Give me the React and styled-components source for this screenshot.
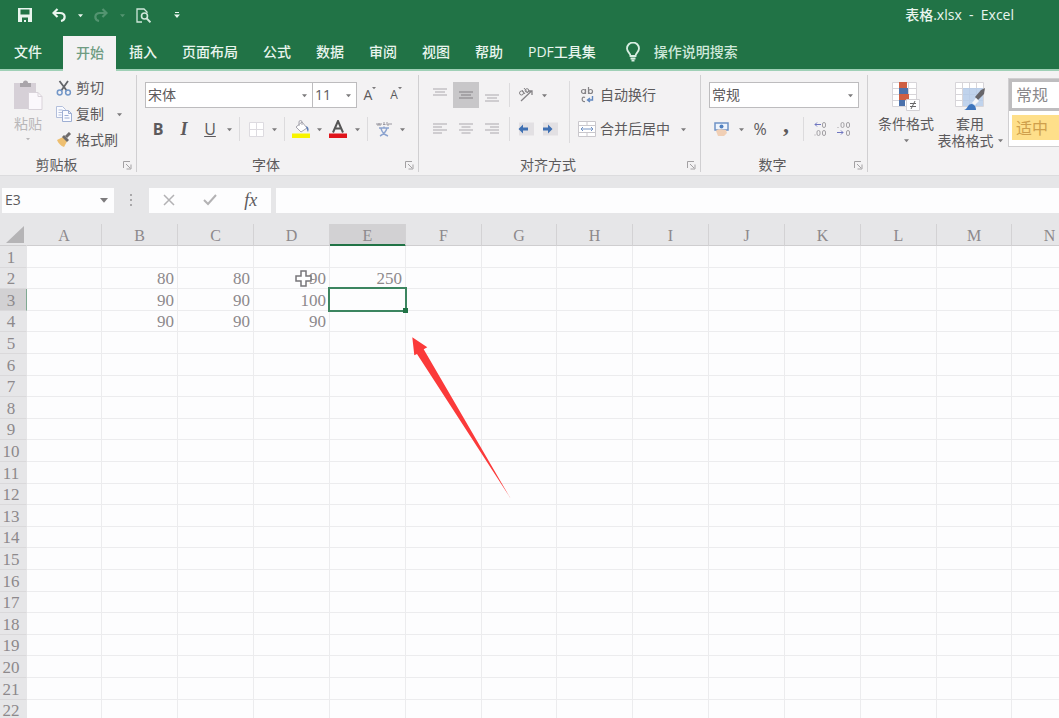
import React from "react";
import styled, { createGlobalStyle, css } from "styled-components";

const colors = {
  green: "#217346",
  mint: "#9fd0b6",
  ribbon: "#f3f2f3",
  chrome: "#e6e6e8",
  line: "#d0cfd1",
  grid: "#ececee",
  ink: "#5c5a5c",
  muted: "#b9b7b9",
  cell: "#8d898c",
};

const GlobalStyle = createGlobalStyle`
  * {
    box-sizing: border-box;
  }
  body {
    margin: 0;
    font-family: "Open Sans", "Noto Sans CJK SC", sans-serif;
    font-size: 14px;
    line-height: 18px;
    color: ${colors.ink};
  }
  button, input {
    font: inherit;
    color: inherit;
    margin: 0;
    padding: 0;
    border: 0;
    background: none;
  }
`;

const Window = styled.div`
  display: flex;
  flex-direction: column;
  height: 100vh;
  overflow: hidden;
  background: #fdfdfe;
`;

/* title bar */

const TitleBar = styled.header`
  display: flex;
  align-items: center;
  justify-content: space-between;
  height: 36px;
  padding: 0 45px 6px 6px;
  background: ${colors.green};
  color: #e9f5ee;
`;

const QuickAccess = styled.div`
  display: flex;
  align-items: center;
`;

const QuickButton = styled.button`
  display: flex;
  align-items: center;
  justify-content: center;
  width: ${({ $width = 30 }) => $width}px;
  height: 24px;
  opacity: ${({ disabled }) => (disabled ? 0.25 : 1)};
`;

const Title = styled.h1`
  margin: 0;
  font-size: 14px;
  font-weight: 500;
  white-space: pre;
`;

/* tabs */

const TabBar = styled.nav`
  display: flex;
  align-items: stretch;
  height: 35px;
  border-bottom: 2px solid ${colors.mint};
  background: ${colors.green};
`;

const Tab = styled.button`
  flex: none;
  padding: 0 12px 2px 13px;
  color: #e9f5ee;
  font-weight: 500;
  white-space: nowrap;

  ${({ $file }) =>
    $file &&
    css`
      padding: 0 21px 2px 14px;
    `}

  ${({ $active }) =>
    $active &&
    css`
      margin-bottom: -2px;
      background: ${colors.ribbon};
      color: #6f9c82;
    `}
`;

const TellMe = styled.button`
  display: flex;
  align-items: center;
  gap: 14px;
  padding: 0 0 2px 18px;
  color: #cfe8da;
  font-weight: 500;
  white-space: nowrap;
`;

/* ribbon */

const Ribbon = styled.section`
  display: flex;
  flex: none;
  height: 105px;
  padding: 4px 0 3px;
  overflow: hidden;
  background: ${colors.ribbon};
  border-bottom: 1px solid #dcdcde;
`;

const Group = styled.div`
  display: flex;
  flex: none;
  flex-direction: column;
  width: ${({ $width }) => $width}px;
  border-right: 1px solid ${colors.line};
`;

const GroupBody = styled.div`
  display: flex;
  flex: 1;
  padding: 0 8px;
`;

const GroupFooter = styled.div`
  display: flex;
  align-items: center;
  height: 14px;
  padding-right: 3px;
`;

const GroupName = styled.span`
  flex: 1;
  padding-right: 8px;
  text-align: center;
`;

const Launcher = styled.button`
  display: flex;
  align-items: center;
  justify-content: center;
  width: 12px;
  height: 12px;
`;

const Column = styled.div`
  display: flex;
  flex-direction: column;
  gap: 8px;
  padding-top: 7px;
`;

const Row = styled.div`
  display: flex;
  align-items: center;
  gap: ${({ $gap = 0 }) => $gap}px;
  height: 26px;
`;

const ToolButton = styled.button`
  display: flex;
  align-items: center;
  justify-content: center;
  width: ${({ $width = 26 }) => $width}px;
  height: 26px;
  font-size: 16px;
  background: ${({ $pressed }) => ($pressed ? "#c8c7c9" : "none")};
`;

const ItalicText = styled.i`
  font-family: "Liberation Serif", serif;
  font-size: 18px;
  font-weight: 700;
`;

const FontSizeText = styled.span`
  display: flex;
  align-items: flex-start;
  font-size: ${({ $size }) => $size}px;
`;

const Comma = styled.b`
  font-family: "Liberation Serif", serif;
  font-size: 24px;
  line-height: 8px;
  padding-bottom: 10px;
`;

const CaretButton = styled.button`
  display: flex;
  align-items: center;
  justify-content: center;
  width: 12px;
  height: 26px;
`;

const Separator = styled.span`
  width: 1px;
  height: 24px;
  margin: 0 4px;
  background: #dcdbdd;
`;

const TallSeparator = styled(Separator)`
  height: 62px;
  margin: 6px 8px 0 7px;
`;

const Combo = styled.label`
  display: flex;
  align-items: center;
  width: ${({ $width }) => $width}px;
  height: 26px;
  padding: 0 2px;
  border: 1px solid #bdbcbe;
  background: #fff;

  input {
    flex: 1;
    min-width: 0;
    outline: 0;
  }
`;

const FontRow = styled(Row)`
  ${Combo} + ${Combo} {
    margin-left: -1px;
  }
`;

const LabelButton = styled.button`
  display: flex;
  align-items: center;
  gap: 4px;
  height: 26px;
  white-space: nowrap;
`;

const PasteButton = styled.button`
  display: flex;
  flex-direction: column;
  align-items: center;
  align-self: flex-start;
  gap: 4px;
  width: 40px;
  padding-top: 5px;
  color: ${colors.muted};
`;

const ClipboardList = styled.div`
  display: flex;
  flex-direction: column;
  padding-left: 8px;
`;

const BigButton = styled.button`
  display: flex;
  flex-direction: column;
  align-items: center;
  align-self: flex-start;
  width: 64px;
  padding-top: 3px;
  line-height: 17px;
  white-space: nowrap;

  svg {
    flex: none;
  }
`;

const BigLabel = styled.span`
  display: flex;
  align-items: center;
  justify-content: center;
  gap: 4px;
  min-height: 17px;
`;

const BigIcon = styled.span`
  height: 34px;
`;

const Styles = styled.div`
  display: flex;
  flex: 1;
  padding: 3px 0 0 6px;
`;

const Gallery = styled.div`
  display: flex;
  flex: none;
  flex-direction: column;
  gap: 4px;
  align-self: flex-start;
  width: 160px;
  height: 69px;
  margin-left: 6px;
  border: 1px solid ${colors.line};
  background: #fff;
`;

const StyleCell = styled.button`
  height: ${({ $selected }) => ($selected ? 32 : 25)}px;
  padding-left: 4px;
  border: ${({ $selected }) => ($selected ? "3px solid #bebdbf" : "0")};
  margin-left: ${({ $selected }) => ($selected ? 0 : 3)}px;
  background: ${({ $selected }) => ($selected ? "#fff" : "#fedf8a")};
  color: ${({ $selected }) => ($selected ? "#8a888a" : "#cf9f4c")};
  font-size: 16px;
  text-align: left;
`;

/* formula bar */

const FormulaBar = styled.div`
  display: flex;
  flex: none;
  align-items: center;
  height: 48px;
  background: ${colors.chrome};
`;

const NameBox = styled.label`
  display: flex;
  align-items: center;
  width: 112px;
  height: 25px;
  margin-left: 2px;
  padding: 0 4px 0 3px;
  background: #fdfdfe;

  input {
    flex: 1;
    min-width: 0;
    outline: 0;
  }
`;

const Grip = styled.span`
  display: flex;
  justify-content: center;
  width: 35px;
`;

const FormulaTools = styled.div`
  display: flex;
  align-items: center;
  justify-content: space-around;
  width: 122px;
  height: 25px;
  background: #fdfdfe;
`;

const FxLabel = styled.i`
  font-family: "Liberation Serif", serif;
  font-size: 18px;
`;

const FormulaInput = styled.input`
  && {
    flex: 1;
    height: 25px;
    margin-left: 5px;
    padding: 0 8px;
    background: #fdfdfe;
    outline: 0;
  }
`;

/* sheet */

const Sheet = styled.main`
  position: relative;
  flex: 1;
  overflow: hidden;
`;

const Table = styled.table`
  table-layout: fixed;
  width: 1px;
  border-spacing: 0;
  font-family: "Liberation Serif", serif;
  font-size: 17px;
  line-height: 18px;
  color: ${colors.cell};
`;

const Col = styled.col`
  width: ${({ $width }) => $width}px;
`;

const ColumnHead = styled.th`
  height: 22px;
  padding: 3px 0 0;
  border-right: 1px solid #d3d2d4;
  border-bottom: 1px solid #cfced0;
  background: ${colors.chrome};
  font-size: 16px;
  font-weight: 400;

  ${({ $active }) =>
    $active &&
    css`
      border-bottom-color: ${colors.green};
      background: #d2d1d3;
      box-shadow: inset 0 -1px ${colors.green};
    `}
`;

const Corner = styled(ColumnHead)`
  padding: 0;
  border-right-color: ${colors.chrome};

  svg {
    display: block;
    margin: 0 0 0 6px;
  }
`;

const RowHead = styled.th`
  padding: 2px 4px 0 0;
  border-right: 1px solid ${({ $active }) => ($active ? "#7fa992" : colors.chrome)};
  border-bottom: 1px solid #dad9db;
  background: ${({ $active }) => ($active ? "#d2d1d3" : colors.chrome)};
  font-weight: 400;
`;

const Cell = styled.td`
  position: relative;
  padding: 2px 3px 0 0;
  border-right: 1px solid ${colors.grid};
  border-bottom: 1px solid ${colors.grid};
  text-align: right;
`;

// 108px for every five rows
const SheetRow = styled.tr`
  height: 22px;

  &:nth-child(5n + 2),
  &:nth-child(5n + 4) {
    height: 21px;
  }
`;

const Selection = styled.div`
  position: absolute;
  z-index: 1;
  inset: -2px;
  border: 2px solid #3c8560;

  &::after {
    content: "";
    position: absolute;
    right: -3px;
    bottom: -3px;
    width: 5px;
    height: 5px;
    background: ${colors.green};
  }
`;

const Pointer = styled.svg`
  position: absolute;
  top: 2px;
  left: 41px;
`;

const Arrow = styled.svg`
  position: absolute;
  top: 113px;
  left: 411px;
`;

/* icons */

const Caret = ({ size = 5, color = "#7d7b7d" }) => (
  <svg width={size} height={size} viewBox="0 0 6 6">
    <path d="M0 1.5h6L3 5z" fill={color} />
  </svg>
);

const SaveIcon = () => (
  <svg width="14" height="14" viewBox="0 0 14 14">
    <path
      fill="#e9f5ee"
      fillRule="evenodd"
      d="M0 0h14v14H0zM2.5 1.5v5h9v-5zM4 9.5V14h2v-2h2v2h2V9.5z"
    />
  </svg>
);

const UndoIcon = () => (
  <svg width="14" height="14" viewBox="0 0 14 14" fill="none" stroke="#e9f5ee" strokeWidth="2.2">
    <path d="M5.5 1 1.5 5l4 4M2 5h6c6 0 6 7 1 8" />
  </svg>
);

const RedoIcon = () => (
  <svg width="14" height="14" viewBox="0 0 14 14" fill="none" stroke="#e9f5ee" strokeWidth="2.2">
    <path d="M8.5 1l4 4-4 4M12 5H6c-6 0-6 7-1 8" />
  </svg>
);

const PreviewIcon = () => (
  <svg width="15" height="15" viewBox="0 0 15 15" fill="none" stroke="#cfe8da">
    <path d="M6 14H1V1h7l3 3v1" strokeWidth="1.3" />
    <circle cx="8.5" cy="8" r="3" strokeWidth="1.6" />
    <path d="m10.5 10.300 4 4" strokeWidth="2" />
  </svg>
);

const CustomizeIcon = () => (
  <svg width="6" height="8" viewBox="0 0 6 8" fill="#e9f5ee">
    <path d="M1 1h4v1H1zM0 3.5h6L3 7z" />
  </svg>
);

const BulbIcon = () => (
  <svg width="14" height="20" viewBox="0 0 14 20" fill="none" stroke="#d8eee2" strokeWidth="1.8">
    <path d="M4.5 14c0-3-3.5-4-3.5-7.5a6 6 0 0 1 12 0C13 10 9.5 11 9.5 14zM4.5 16.5h5M5.5 18.700h3" />
  </svg>
);

const PasteIcon = () => (
  <svg width="30" height="31" viewBox="0 0 30 31">
    <path d="M1 3h22v26H1z" fill="#d6d0d7" />
    <path d="M7 3h3a2.500 2.500 0 0 1 5 0h3v4H7z" fill="#a9a5aa" />
    <path d="M15.500 12.500H25l4 4v13H15.500z" fill="#fbf8fc" stroke="#d9d3da" />
    <path d="M25 12.500v4h4" fill="none" stroke="#d9d3da" />
  </svg>
);

const CutIcon = () => (
  <svg width="16" height="16" viewBox="0 0 16 16" fill="none">
    <path d="M3.500 1 11 11M12 1 5 11" stroke="#626468" strokeWidth="1.800" />
    <circle cx="3.700" cy="12.500" r="2.400" stroke="#7397c8" strokeWidth="1.500" />
    <circle cx="12" cy="12.500" r="2.400" stroke="#7397c8" strokeWidth="1.500" />
  </svg>
);

const CopyIcon = () => (
  <svg width="16" height="16" viewBox="0 0 16 16" fill="#fafbff" stroke="#b3bfdb">
    <path d="M.5.500h6l3 3v8h-9zM2.500 4h4M2.500 6.500h4M2.500 9h3" />
    <path d="M6.500 4.500h6l3 3v8h-9zM12.500 4.500v3h3M8.500 9.500h4M8.500 12h5" stroke="#9eafd3" />
  </svg>
);

const BrushIcon = () => (
  <svg width="16" height="16" viewBox="0 0 16 16">
    <path d="m1 8 6-3 4 4.500L8 15c-3-1-6-4-7-7z" fill="#eebf70" />
    <path d="m6 5 2-2 5 5-2 2z" fill="#6f6c6c" />
    <path d="m10 5 4-4" stroke="#6f6c6c" strokeWidth="3" />
  </svg>
);

const BordersIcon = () => (
  <svg width="15" height="15" viewBox="0 0 15 15" fill="#fff" stroke="#dddbe0">
    <path d="M.5.500h14v14H.5zM7.500.500v14M.5 7.500h14" />
  </svg>
);

const FillIcon = () => (
  <svg width="18" height="18" viewBox="0 0 18 18">
    <path d="m4 7 6-5 5 6-6 4z" fill="#fff" stroke="#a5a4ad" />
    <path d="M7 6V2a1.500 1.500 0 0 1 3 0v3" fill="none" stroke="#a5a4ad" />
    <path d="M14 6c3 1 3 4 2 6-1-1-1-3-2-6z" fill="#5e7fb8" />
    <path d="M0 13.500h18V18H0z" fill="#f8f400" />
  </svg>
);

const FontColorIcon = () => (
  <svg width="18" height="18" viewBox="0 0 18 18">
    <path d="M4 12.500 9 1l5 11.500M6 8.500h6" fill="none" stroke="#555" strokeWidth="2" />
    <path d="M0 13.500h18V18H0z" fill="#e0141b" />
  </svg>
);

const PhoneticIcon = () => (
  <svg width="16" height="16" viewBox="0 0 16 16" fill="none">
    <path d="M1 2v2h2V2v2h2V2M7 3.500h2.500M8 1v3M11 1v3h2V2M15 2v2" stroke="#9a98a0" />
    <path d="M3 7h10M8 5.500V7M11 7c-1 4-3 6-7 8M5 7.500c1 4 3 6 7 7.500" stroke="#8ba3cf" strokeWidth="1.400" />
  </svg>
);

const LauncherIcon = () => (
  <svg width="9" height="9" viewBox="0 0 9 9" fill="none" stroke="#a3a1a3">
    <path d="M.5 7V.5H7M3 3l4 4M8 3.500V8H3.500" />
  </svg>
);

const Lines = ({ widths, align = "middle", top = 0, color = "#cfcdd0" }) => (
  <svg width="14" height="14" viewBox="0 0 14 14" fill={color}>
    {widths.map((w, i) => (
      <rect
        key={i}
        x={align === "left" ? 0 : align === "right" ? 14 - w : (14 - w) / 2}
        y={top + i * 3}
        width={w}
        height="2"
      />
    ))}
  </svg>
);

const OrientationIcon = () => (
  <svg width="16" height="16" viewBox="0 0 16 16" fill="none" stroke="#858386">
    <circle cx="3.500" cy="6" r="2" />
    <path d="m4 3 3 4M6 1l4 5" />
    <circle cx="9" cy="3.500" r="1.800" />
    <path d="M3 14 13 4.500M10 4h4v4" strokeWidth="1.300" />
  </svg>
);

const IndentIcon = ({ right }) => (
  <svg width="16" height="14" viewBox="0 0 16 14">
    <path d="M1 .5h15v13H1z" fill="#e2e0e3" />
    <path
      d={right ? "M1 5.5h5V2.5L10.500 7 6 11.500v-3H1z" : "M10 5.5H5V2.5L.5 7 5 11.500v-3h5z"}
      fill="#3f70b3"
    />
  </svg>
);

const WrapIcon = () => (
  <svg width="18" height="18" viewBox="0 0 18 18" fill="none" stroke="#858386" strokeWidth="1.200">
    <circle cx="5.500" cy="5.500" r="2" />
    <path d="M7.500 3v5M10.500 1v7" />
    <circle cx="12.500" cy="5.500" r="2" />
    <path d="M7 11.500c-3-2-4.500 4.500 0 4" />
    <path d="M14.500 10v4H10M12 12l-2.500 2 2.500 2" stroke="#6288c0" strokeWidth="1.400" />
  </svg>
);

const MergeIcon = () => (
  <svg width="18" height="18" viewBox="0 0 18 18" fill="#fff" stroke="#c9c7cc">
    <path d="M.5 1.500h17v15H.5zM.5 5.500h17M.5 12.500h17M9 1.500v4M9 12.500v4" />
    <path d="M3 9h12M5 7 3 9l2 2M13 7l2 2-2 2" fill="none" stroke="#7393c4" />
  </svg>
);

const CurrencyIcon = () => (
  <svg width="18" height="18" viewBox="0 0 18 18">
    <path d="M2 3h13v7H2z" fill="#eef4fc" stroke="#6f92c6" strokeWidth="1.500" />
    <circle cx="8.500" cy="6.500" r="2" fill="#4f7fbf" />
    <path d="M3 11c3-3 6-1 10-1l1 3-3 3H5z" fill="#f0cfb5" />
  </svg>
);

const DecimalIcon = ({ decrease }) => (
  <svg width="14" height="16" viewBox="0 0 14 16" fill="none" stroke="#a4a2a6">
    {decrease ? (
      <>
        <path d="M1 6v1" />
        <rect x="4" y="1.500" width="3" height="5" rx="1.500" />
        <rect x="9.500" y="1.500" width="3" height="5" rx="1.500" />
        <path d="M0 11.500h6M4 9.500l2 2-2 2" stroke="#6f76c0" />
        <rect x="9.500" y="9.500" width="3" height="5" rx="1.500" />
      </>
    ) : (
      <>
        <path d="M8 3.500H2M4 1.500l-2 2 2 2" stroke="#6f76c0" />
        <rect x="9.500" y="1.500" width="3" height="5" rx="1.500" />
        <path d="M2 13.500v1" />
        <rect x="4" y="9.500" width="3" height="5" rx="1.500" />
        <rect x="9.500" y="9.500" width="3" height="5" rx="1.500" />
      </>
    )}
  </svg>
);

const ConditionalIcon = () => (
  <svg width="30" height="30" viewBox="0 0 30 30">
    <path
      d="M1.500 1.500h24v24h-24zM1.500 7.500h24M1.500 13.500h24M1.500 19.500h24M8.500 1v24M17.500 1v24"
      fill="#fff"
      stroke="#d7d5d9"
    />
    <path d="M8 1h8v6H8zM8 13h10v6H8z" fill="#cf5f42" />
    <path d="M8 7h9v6H8zM8 19h6v6H8z" fill="#4b71ab" />
    <path d="M15.500 18.500h13v11h-13z" fill="#fff" stroke="#d2d0d4" />
    <path d="M19 22.500h6M19 25.500h6M24 20l-4 8" fill="none" stroke="#666" />
  </svg>
);

const FormatTableIcon = () => (
  <svg width="32" height="30" viewBox="0 0 32 30">
    <path
      d="M1.500 1.500h28v24h-28zM1.500 7.500h28M1.500 13.500h28M1.500 19.500h28M8.500 1v24M15.500 1v24M22.500 1v24"
      fill="#fff"
      stroke="#d7d5d9"
    />
    <path d="M9 7h20v18H9z" fill="#b5cbe9" fillOpacity=".85" />
    <path d="m31 7-1 6-6 6-3-3 6-7z" fill="#67666a" />
    <path d="M10 29c4-1 3-6 8-6 3 1 4 3 4 6z" fill="#3e75bd" />
    <path d="m18 22 4-5 3 3-4 4z" fill="#f6f6f8" />
  </svg>
);

const CaretTool = ({ label }) => (
  <CaretButton aria-label={label}>
    <Caret />
  </CaretButton>
);

const Footer = ({ name }) => (
  <GroupFooter>
    <GroupName>{name}</GroupName>
    <Launcher aria-label={`${name}设置`}>
      <LauncherIcon />
    </Launcher>
  </GroupFooter>
);

/* data */

const TABS = ["文件", "开始", "插入", "页面布局", "公式", "数据", "审阅", "视图", "帮助", "PDF工具集"];
const COLUMNS = "ABCDEFGHIJKLMN".split("");
const ROWS = Array.from({ length: 22 }, (_, i) => i + 1);
const VALUES = {
  B2: 80,
  C2: 80,
  D2: 90,
  E2: 250,
  B3: 90,
  C3: 90,
  D3: 100,
  B4: 90,
  C4: 90,
  D4: 90,
};

const ClipboardGroup = () => (
  <Group $width={137}>
    <GroupBody>
      <PasteButton>
        <PasteIcon />
        粘贴
        <Caret size={4} color={colors.muted} />
      </PasteButton>
      <ClipboardList>
        <LabelButton>
          <CutIcon />
          剪切
        </LabelButton>
        <Row $gap={9}>
          <LabelButton>
            <CopyIcon />
            复制
          </LabelButton>
          <CaretTool label="复制选项" />
        </Row>
        <LabelButton>
          <BrushIcon />
          格式刷
        </LabelButton>
      </ClipboardList>
    </GroupBody>
    <Footer name="剪贴板" />
  </Group>
);

const FontGroup = () => (
  <Group $width={282}>
    <GroupBody>
      <Column>
        <FontRow>
          <Combo $width={168}>
            <input aria-label="字体" defaultValue="宋体" />
            <CaretTool label="选择字体" />
          </Combo>
          <Combo $width={45}>
            <input aria-label="字号" defaultValue="11" />
            <CaretTool label="选择字号" />
          </Combo>
          <ToolButton aria-label="增大字号">
            <FontSizeText $size={14}>
              A<Caret size={4} />
            </FontSizeText>
          </ToolButton>
          <ToolButton aria-label="减小字号">
            <FontSizeText $size={12}>
              A<Caret size={4} />
            </FontSizeText>
          </ToolButton>
        </FontRow>
        <Row>
          <ToolButton>
            <b>B</b>
          </ToolButton>
          <ToolButton>
            <ItalicText>I</ItalicText>
          </ToolButton>
          <ToolButton>
            <u>U</u>
          </ToolButton>
          <CaretTool label="下划线选项" />
          <Separator />
          <ToolButton $width={24} aria-label="边框">
            <BordersIcon />
          </ToolButton>
          <CaretTool label="边框选项" />
          <Separator />
          <ToolButton $width={24} aria-label="填充颜色">
            <FillIcon />
          </ToolButton>
          <CaretTool label="填充颜色选项" />
          <ToolButton aria-label="字体颜色">
            <FontColorIcon />
          </ToolButton>
          <CaretTool label="字体颜色选项" />
          <Separator />
          <ToolButton $width={24} aria-label="拼音">
            <PhoneticIcon />
          </ToolButton>
          <CaretTool label="拼音选项" />
        </Row>
      </Column>
    </GroupBody>
    <Footer name="字体" />
  </Group>
);

const AlignmentGroup = () => (
  <Group $width={282}>
    <GroupBody>
      <Column>
        <Row>
          <ToolButton aria-label="顶端对齐">
            <Lines widths={[14, 10, 14]} />
          </ToolButton>
          <ToolButton $pressed aria-label="垂直居中">
            <Lines widths={[14, 10, 14]} top={3} color="#a5a3a6" />
          </ToolButton>
          <ToolButton aria-label="底端对齐">
            <Lines widths={[14, 10, 14]} top={6} />
          </ToolButton>
          <Separator />
          <ToolButton $width={24} aria-label="方向">
            <OrientationIcon />
          </ToolButton>
          <CaretTool label="方向选项" />
        </Row>
        <Row>
          <ToolButton aria-label="左对齐">
            <Lines widths={[14, 9, 14, 9]} top={1} align="left" />
          </ToolButton>
          <ToolButton aria-label="居中">
            <Lines widths={[14, 9, 14, 9]} top={1} />
          </ToolButton>
          <ToolButton aria-label="右对齐">
            <Lines widths={[14, 9, 14, 9]} top={1} align="right" />
          </ToolButton>
          <Separator />
          <ToolButton $width={24} aria-label="减少缩进量">
            <IndentIcon />
          </ToolButton>
          <ToolButton $width={24} aria-label="增加缩进量">
            <IndentIcon right />
          </ToolButton>
        </Row>
      </Column>
      <TallSeparator />
      <Column>
        <LabelButton>
          <WrapIcon />
          自动换行
        </LabelButton>
        <Row $gap={7}>
          <LabelButton>
            <MergeIcon />
            合并后居中
          </LabelButton>
          <CaretTool label="合并选项" />
        </Row>
      </Column>
    </GroupBody>
    <Footer name="对齐方式" />
  </Group>
);

const NumberGroup = () => (
  <Group $width={167}>
    <GroupBody>
      <Column>
        <Combo $width={150}>
          <input aria-label="数字格式" defaultValue="常规" />
          <CaretTool label="选择数字格式" />
        </Combo>
        <Row>
          <ToolButton aria-label="会计数字格式">
            <CurrencyIcon />
          </ToolButton>
          <CaretTool label="货币选项" />
          <ToolButton>%</ToolButton>
          <ToolButton>
            <Comma>,</Comma>
          </ToolButton>
          <Separator />
          <ToolButton $width={24} aria-label="增加小数位数">
            <DecimalIcon />
          </ToolButton>
          <ToolButton $width={24} aria-label="减少小数位数">
            <DecimalIcon decrease />
          </ToolButton>
        </Row>
      </Column>
    </GroupBody>
    <Footer name="数字" />
  </Group>
);

const StylesGroup = () => (
  <Styles>
    <BigButton>
      <BigIcon>
        <ConditionalIcon />
      </BigIcon>
      <BigLabel>条件格式</BigLabel>
      <BigLabel>
        <Caret />
      </BigLabel>
    </BigButton>
    <BigButton>
      <BigIcon>
        <FormatTableIcon />
      </BigIcon>
      <BigLabel>套用</BigLabel>
      <BigLabel>
        表格格式
        <Caret />
      </BigLabel>
    </BigButton>
    <Gallery>
      <StyleCell $selected>常规</StyleCell>
      <StyleCell>适中</StyleCell>
    </Gallery>
  </Styles>
);

const Spreadsheet = ({ activeColumn, activeRow }) => (
  <Table>
    <colgroup>
      <Col $width={27} />
      {COLUMNS.map((name, i) => (
        <Col key={name} $width={i % 6 === 0 ? 75 : 76} />
      ))}
    </colgroup>
    <thead>
      <tr>
        <Corner aria-label="全选">
          <svg width="18" height="17" viewBox="0 0 18 17">
            <path d="M18 0v17H0z" fill="#b5b4b6" />
          </svg>
        </Corner>
        {COLUMNS.map(name => (
          <ColumnHead key={name} $active={name === activeColumn}>
            {name}
          </ColumnHead>
        ))}
      </tr>
    </thead>
    <tbody>
      {ROWS.map(row => (
        <SheetRow key={row}>
          <RowHead $active={row === activeRow}>{row}</RowHead>
          {COLUMNS.map(name => (
            <Cell key={name}>
              {VALUES[`${name}${row}`]}
              {name === activeColumn && row === activeRow && <Selection />}
              {name === "D" && row === 2 && (
                <Pointer width="18" height="18" viewBox="0 0 18 18">
                  <path
                    d="M6 1h5v5h5v5h-5v5H6v-5H1V6h5z"
                    fill="#fff"
                    stroke="#77757a"
                    strokeWidth="1.500"
                  />
                </Pointer>
              )}
            </Cell>
          ))}
        </SheetRow>
      ))}
    </tbody>
  </Table>
);

const App = () => (
  <>
    <GlobalStyle />
    <Window>
      <TitleBar>
        <QuickAccess>
          <QuickButton $width={38} aria-label="保存">
            <SaveIcon />
          </QuickButton>
          <QuickButton aria-label="撤消">
            <UndoIcon />
          </QuickButton>
          <QuickButton $width={12} aria-label="撤消选项">
            <Caret color="#e9f5ee" />
          </QuickButton>
          <QuickButton aria-label="恢复" disabled>
            <RedoIcon />
          </QuickButton>
          <QuickButton $width={12} aria-label="恢复选项" disabled>
            <Caret color="#e9f5ee" />
          </QuickButton>
          <QuickButton aria-label="打印预览">
            <PreviewIcon />
          </QuickButton>
          <QuickButton $width={38} aria-label="自定义快速访问工具栏">
            <CustomizeIcon />
          </QuickButton>
        </QuickAccess>
        <Title>{"表格.xlsx  -  Excel"}</Title>
      </TitleBar>
      <TabBar>
        {TABS.map(tab => (
          <Tab key={tab} $file={tab === "文件"} $active={tab === "开始"}>
            {tab}
          </Tab>
        ))}
        <TellMe>
          <BulbIcon />
          操作说明搜索
        </TellMe>
      </TabBar>
      <Ribbon>
        <ClipboardGroup />
        <FontGroup />
        <AlignmentGroup />
        <NumberGroup />
        <StylesGroup />
      </Ribbon>
      <FormulaBar>
        <NameBox>
          <input aria-label="名称框" defaultValue="E3" />
          <CaretButton aria-label="选择名称">
            <Caret size={8} />
          </CaretButton>
        </NameBox>
        <Grip>
          <svg width="3" height="13" viewBox="0 0 3 13" fill="#a9a8aa">
            <path d="M0 0h2v2H0zM0 5h2v2H0zM0 10h2v2H0z" />
          </svg>
        </Grip>
        <FormulaTools>
          <ToolButton aria-label="取消">
            <svg width="12" height="12" viewBox="0 0 12 12" stroke="#b3b2b4" strokeWidth="1.500">
              <path d="m1 1 10 10M11 1 1 11" />
            </svg>
          </ToolButton>
          <ToolButton aria-label="输入">
            <svg width="14" height="12" viewBox="0 0 14 12" fill="none" stroke="#b3b2b4" strokeWidth="2">
              <path d="m1 6 4 4 8-9" />
            </svg>
          </ToolButton>
          <ToolButton aria-label="插入函数">
            <FxLabel>fx</FxLabel>
          </ToolButton>
        </FormulaTools>
        <FormulaInput aria-label="编辑栏" />
      </FormulaBar>
      <Sheet>
        <Spreadsheet activeColumn="E" activeRow={3} />
        <Arrow width="100" height="163" viewBox="0 0 100 163">
          <path d="M1.3.3 16.3 10.3 12.7 12.3 99.7 161.7 6 17 3.3 18.3z" fill="#fb3a3a" />
        </Arrow>
      </Sheet>
    </Window>
  </>
);

export default App;
